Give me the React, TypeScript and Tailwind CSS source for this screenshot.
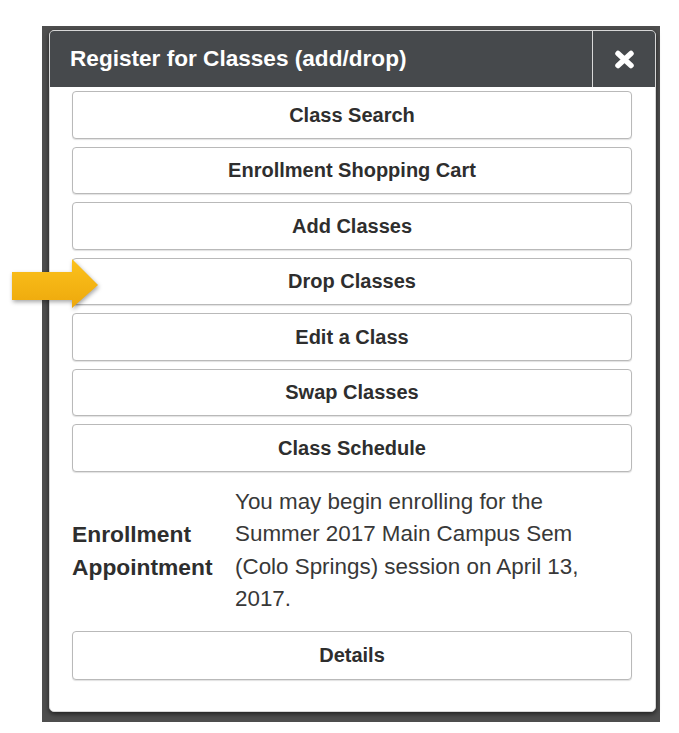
import React from "react";

const actions = [
  "Class Search",
  "Enrollment Shopping Cart",
  "Add Classes",
  "Drop Classes",
  "Edit a Class",
  "Swap Classes",
  "Class Schedule",
];

export default function App() {
  return (
    <main className="relative min-h-screen bg-white pt-[26px] pl-[42px] font-['Liberation_Sans',Arial,sans-serif]">
      {/* ===== dark backdrop around the dialog ===== */}
      <div className="w-[618px] bg-[#4e4e4e] pt-[4px] pl-[7px] pr-[4px] pb-[10px]">
        <div className="w-[607px] rounded-[5px] border border-[#d6d6d6] bg-white shadow-[0_2px_5px_rgba(0,0,0,0.6)] overflow-hidden">
          {/* header */}
          <div className="flex h-[56px] bg-[#46494c]">
            <h1 className="flex-1 flex items-center pl-[20px] text-[22.6px] font-bold text-white">
              Register for Classes (add/drop)
            </h1>
            <button className="w-[63px] flex items-center justify-center border-l border-[#d8d8d8]">
              <CloseIcon />
            </button>
          </div>

          {/* body */}
          <div className="pt-[4px] pl-[22px] pr-[23px] pb-[31px]">
            <div className="flex flex-col gap-[8px]">
              {actions.map((label) => (
                <ActionButton key={label} label={label} />
              ))}
            </div>

            <div className="mt-[14px] flex items-center leading-[32.5px]">
              <div className="w-[163px] shrink-0 text-[22.8px] font-bold text-[#2e2e2e]">
                Enrollment
                <br />
                Appointment
              </div>
              <p className="w-[365px] text-[22.4px] text-[#383838]">
                You may begin enrolling for the Summer 2017 Main Campus Sem (Colo Springs) session on April 13, 2017.
              </p>
            </div>

            <div className="mt-[15px]">
              <ActionButton label="Details" tall />
            </div>
          </div>
        </div>
      </div>

      {/* ===== pointer arrow ===== */}
      <svg className="absolute left-[10px] top-[257px] drop-shadow-[1px_2px_2px_rgba(0,0,0,0.35)]" width="92" height="54" viewBox="0 0 92 54">
        <defs>
          <linearGradient id="arrowFill" x1="0" y1="0" x2="0" y2="1">
            <stop offset="0" stopColor="#fcc21c" />
            <stop offset="1" stopColor="#eda80c" />
          </linearGradient>
        </defs>
        <path d="M2 15 H62 V2 L88 28 L62 51 V43 H2 Z" fill="url(#arrowFill)" />
      </svg>
    </main>
  );
}

function ActionButton({ label, tall }: { label: string; tall?: boolean }) {
  return (
    <button
      className={`w-full ${tall ? "h-[49px]" : "h-[47.5px]"} flex items-center justify-center rounded-[4px] border border-[#b9b9b9] bg-white text-[20px] font-bold text-[#2e2e2e] shadow-[0_1px_1px_rgba(0,0,0,0.12)]`}
    >
      {label}
    </button>
  );
}

function CloseIcon() {
  return (
    <svg width="21" height="19" viewBox="0 0 21 19">
      <path d="M4 3.5 L17 15.5 M17 3.5 L4 15.5" stroke="#ffffff" strokeWidth="5.5" strokeLinecap="round" />
    </svg>
  );
}
